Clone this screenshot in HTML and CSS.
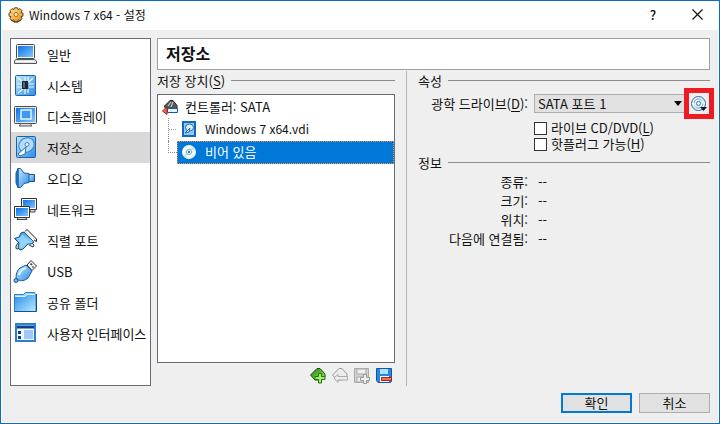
FILE: index.html
```html
<!DOCTYPE html>
<html lang="ko">
<head>
<meta charset="utf-8">
<title>Windows 7 x64 - 설정</title>
<link rel="stylesheet" href="styles.css">
</head>
<body>
<svg class="defs" aria-hidden="true">
  <defs>
    <linearGradient id="blue" x1="0" y1="0" x2="1" y2="1"><stop offset="0" stop-color="#0f6fe6"/><stop offset="1" stop-color="#7cc8ff"/></linearGradient>
    <linearGradient id="pale" x1="0" y1="0" x2="1" y2="1"><stop offset="0" stop-color="#c4e8ff"/><stop offset="1" stop-color="#2d8ce4"/></linearGradient>
    <linearGradient id="folder" x1="0" y1="0" x2="1" y2="1"><stop offset="0" stop-color="#2b8fe6"/><stop offset="1" stop-color="#b8ecff"/></linearGradient>
    <linearGradient id="gold" x1="0" y1="0" x2="1" y2="1"><stop offset="0" stop-color="#ffe79a"/><stop offset="1" stop-color="#e58a10"/></linearGradient>
    <linearGradient id="green" x1="0" y1="0" x2="1" y2="1"><stop offset="0" stop-color="#1c7a12"/><stop offset="1" stop-color="#a4f05c"/></linearGradient>
    <linearGradient id="disc" x1="0" y1="0" x2="1" y2="1"><stop offset="0" stop-color="#cfe6ff"/><stop offset=".3" stop-color="#ffffff"/><stop offset=".5" stop-color="#b8f0d8"/><stop offset=".7" stop-color="#ffffff"/><stop offset="1" stop-color="#b9c9fa"/></linearGradient>
  </defs>
</svg>
<div class="window">
  <header class="titlebar">
    <svg class="icon16" viewBox="0 0 16 16"><path d="M6.500.8h3l.5 1.800 2-1 2 2-1 1.900 2 .6v3l-2 .6 1 2-2 2-2-.9-.5 2h-3l-.5-2-2 .9-2-2 1-2-2-.6v-3l2-.6-1-1.900 2-2 2 1z" fill="url(#gold)" stroke="#6b431b"/><circle cx="8" cy="7.500" r="2" fill="#fff6d8" stroke="#b06a12"/><path d="M3 13l3 2h4l3-2" fill="none" stroke="#5b3410"/></svg>
    <h1 class="caption">Windows 7 x64 - 설정</h1>
    <button class="winbtn help" aria-label="도움말">?</button>
    <button class="winbtn" aria-label="닫기"><svg class="close" viewBox="0 0 11 11"><path d="M.5.5l10 10M10.500.5l-10 10" stroke="#111" stroke-width="1.200"/></svg></button>
  </header>
  <div class="content">
    <div class="panes">
      <nav class="nav">
        <a class="navitem" href="#general"><svg class="icon24" viewBox="0 0 24 24"><rect x="3.500" y="2.500" width="18" height="14" rx="1" fill="#f3f3f0" stroke="#45484d"/><rect x="5" y="4" width="15" height="11" fill="url(#blue)"/><path d="M2.500 17.500h19l2 1.500v2.500h-22V19z" fill="#e2e2df" stroke="#55585c"/><path d="M3 19.500h18" stroke="#fff"/></svg>일반</a>
        <a class="navitem" href="#system"><svg class="icon24" viewBox="0 0 24 24"><rect x="2.500" y="2.500" width="20" height="20" rx="1" fill="url(#pale)" stroke="#1a63ad"/><path d="M5 5l5 4M12 4v5M15 4v5M20 5l-4 4M4 11h5M4 14h5M16 11h5M16 14h5M5 20l5-4M12 16v5M15 16v4" stroke="#e9faff" stroke-width="1.200"/><rect x="9" y="8" width="6" height="8" fill="#202830"/><path d="M10 9h2v6h-2z" fill="#59636c"/></svg>시스템</a>
        <a class="navitem" href="#display"><svg class="icon24" viewBox="0 0 24 24"><rect x="1.500" y="2.500" width="22" height="17" rx="1" fill="#eceae3" stroke="#45484d"/><rect x="3" y="4" width="19" height="14" fill="url(#blue)"/><rect x="8" y="6" width="10" height="9" fill="#3f98f2" stroke="#e4f7ff" stroke-width="1.500"/><path d="M8 19.500h9l2 2.500H6z" fill="#ddd" stroke="#55585c"/></svg>디스플레이</a>
        <a class="navitem selected" href="#storage" aria-current="page"><svg class="icon24" viewBox="0 0 24 24"><rect x="3.500" y="1.500" width="19" height="21" rx="1" fill="url(#pale)" stroke="#1a63ad"/><ellipse cx="13.500" cy="10" rx="8" ry="7" transform="rotate(-35 13.500 10)" fill="#b5dcf8" stroke="#3684ca"/><circle cx="14" cy="9.500" r="2" fill="#edf8ff" stroke="#3684ca"/><path d="M13 12l-8 7 2 2 5-2z" fill="#fff" stroke="#2874bb"/></svg>저장소</a>
        <a class="navitem" href="#audio"><svg class="icon24" viewBox="0 0 24 24"><path d="M15 8.500h6.500v7H15z" fill="url(#pale)" stroke="#174d91"/><path d="M5 2.500h2.500L11 7l5 .5v9l-5 1-3.500 4H5z" fill="url(#pale)" stroke="#1d5faa"/><path d="M5 2.500L3 7v10l2 4.500z" fill="#2b7fd2" stroke="#1b599f"/></svg>오디오</a>
        <a class="navitem" href="#network"><svg class="icon24" viewBox="0 0 24 24"><path d="M8.500 1.500h15v11h-15z" fill="#fff" stroke="#333"/><path d="M10 3h12v8H10z" fill="url(#blue)"/><path d="M17 13v2h5v-2" fill="#ddd" stroke="#444"/><path d="M1.500 9.500h15v11h-15z" fill="#fff" stroke="#333"/><path d="M3 11h12v8H3z" fill="url(#blue)"/><path d="M5 21l-1 1.500h10L13 21" fill="#ddd" stroke="#444"/></svg>네트워크</a>
        <a class="navitem" href="#serial"><svg class="icon24" viewBox="0 0 24 24"><path d="M12 3.500l2-2L23.500 11v2.500L21 12" fill="#eee" stroke="#222"/><path d="M5 15l-2 3v2.500l2 .5 3-2M19 15l2 2-1 2-4-2" fill="#eee" stroke="#333"/><path d="M11 4L21 14l-3 2h-3l-5 5-3 1-2-3 1-4-4.500-4.500L6 9l2-4z" fill="url(#folder)" stroke="#174f91"/><path d="M9.500 6.500l8 8-5 1-5 5-.5-6-4-4 4-1z" fill="#a3dbff" fill-opacity=".7"/></svg>직렬 포트</a>
        <a class="navitem" href="#usb"><svg class="icon24" viewBox="0 0 24 24"><path d="M14 6l4-4.500L23.500 7 19 11.500z" fill="#f3f3f3" stroke="#333"/><path d="M17.500 4.500l1.500 1.500M19.500 7.500l1 1" stroke="#333" stroke-width="1.500"/><path d="M13 6l6 6-4 7c-3 3-7 3-10 2l-2-2c0-4 1-8 4-10z" fill="url(#pale)" stroke="#1b5fa8"/><path d="M6 16c1-4 3-6 7-7" stroke="#e3f6ff" stroke-width="2" fill="none"/><circle cx="3" cy="21.500" r="2" fill="#76b9ef" stroke="#164b8b"/></svg>USB</a>
        <a class="navitem" href="#shared"><svg class="icon24" viewBox="0 0 24 24"><path d="M1.500 4.500h9l2-2h9l1 2v17h-21z" fill="#9cd5fa" stroke="#2b7cc1"/><path d="M2 7h10l2-2h8.500v16.500H2z" fill="url(#folder)"/><path d="M1.500 21.500h22V4" fill="none" stroke="#154e99"/><path d="M2.500 6.500h9.500l2-2h8" fill="none" stroke="#d7f2ff"/></svg>공유 폴더</a>
        <a class="navitem" href="#ui"><svg class="icon24" viewBox="0 0 24 24"><rect x="3" y="3" width="19" height="17" fill="#f1f8ff" stroke="#2b7fd2" stroke-width="2"/><path d="M4 6h17" stroke="#0b408c" stroke-width="3"/><path d="M5 10h3v3H5zM5 15h3v3H5z" fill="#123f91"/><path d="M11 9h9v9h-9z" fill="#9fc8fc"/></svg>사용자 인터페이스</a>
      </nav>
      <main class="main">
        <h2 class="pagetitle">저장소</h2>
        <div class="columns">
          <section class="devices">
            <h3 class="group">저장 장치(<u>S</u>)</h3>
            <ul class="tree">
              <li class="node root"><svg class="icon16" viewBox="0 0 16 16"><path d="M2.500 7L8 1.500h3l4 5v5H4z" fill="#55585c" stroke="#252525"/><path d="M6 7l3-4M9 8l2-5" stroke="#ddd"/><path d="M5.500 9.500h10v4h-10z" fill="#e7f4ff" stroke="#1457a9"/><path d="M5 8l-4.500 4L5 15.500z" fill="#f06a45" stroke="#ad2410"/></svg>컨트롤러: SATA</li>
              <li class="node child"><span class="branch"></span><span class="cell file"><svg class="icon16" viewBox="0 0 16 16"><rect x="2" y="1" width="12" height="14" fill="#8accfa" stroke="#1668bf" stroke-width="2"/><ellipse cx="8.500" cy="6.500" rx="4" ry="3.500" fill="#d9f0ff" stroke="#286faf"/><path d="M9 7l-5 5 4-1z" fill="#fff" stroke="#286faf"/></svg>Windows 7 x64.vdi</span></li>
              <li class="node child"><span class="branch last"></span><span class="cell current"><svg class="icon16" viewBox="0 0 16 16"><circle cx="8" cy="8" r="7" fill="url(#disc)"/><circle cx="8" cy="8" r="2.500" fill="#fff" stroke="#70a6d8"/><circle cx="8" cy="8" r="1" fill="#123d70"/></svg>비어 있음</span></li>
            </ul>
            <div class="toolbar">
              <button class="tool" aria-label="컨트롤러 추가"><svg class="icon16" viewBox="0 0 16 16"><path d="M.5 7L7 .5h3L15 6v3l-5 3H5z" fill="url(#green)" stroke="#174f12"/><path d="M8.500 5.500h3v3h3.500v3h-3.500v3.500h-3v-3.500H5v-3h3.500z" fill="#a8ed69" stroke="#207114"/></svg></button>
              <button class="tool" aria-label="컨트롤러 제거" disabled><svg class="icon16" viewBox="0 0 16 16"><path d="M.5 7L7 .5h3L15 6v3l-5 3H5z" fill="#ececec" stroke="#999"/><path d="M6 8.500h9.500v3.500H6v2.500L2 10l4-3.500z" fill="#eee" stroke="#aaa"/></svg></button>
              <button class="tool" aria-label="연결 추가" disabled><svg class="icon16" viewBox="0 0 16 16"><path d="M.5.5h14v14H.5z" fill="#d0d0d0" stroke="#aaa"/><path d="M3 1h9v5H3zM3 9h8v5H3z" fill="#eee" stroke="#aaa"/><path d="M9.500 6.500h3v3h3v3h-3v3h-3v-3h-3v-3h3z" fill="#eee" stroke="#999"/></svg></button>
              <button class="tool" aria-label="연결 제거"><svg class="icon16" viewBox="0 0 16 16"><path d="M.5.5h15v13l-1 1H2l-1.500-2z" fill="#2687df" stroke="#14569f"/><path d="M4 1h8v5H4z" fill="#a8e2ff"/><path d="M4 8h9v6H4z" fill="#e8f6ff"/><path d="M5.500 9.500h10v3h-10z" fill="#ee7050" stroke="#b8210d"/></svg></button>
            </div>
          </section>
          <section class="details">
            <h3 class="group">속성</h3>
            <div class="drive">
              <label class="key" for="drive">광학 드라이브(<u>D</u>):</label>
              <div class="combo"><select class="select" id="drive"><option>SATA 포트 1</option></select><svg class="arrow" viewBox="0 0 8 5"><path d="M0 0h8L4 5z"/></svg></div>
              <button class="tool choose" aria-label="디스크 선택"><svg class="icon16" viewBox="0 0 16 16"><circle cx="7.500" cy="7.500" r="7" fill="url(#disc)" stroke="#3464a8"/><circle cx="7.500" cy="7.500" r="4.500" fill="none" stroke="#5d9fe6" stroke-dasharray="9 5"/><circle cx="7.500" cy="7.500" r="2" fill="#fff" stroke="#2f74c4"/><path d="M9 11h7l-3.500 4z" fill="#101820"/></svg></button>
            </div>
            <div class="checks">
              <label class="check"><input class="box" type="checkbox"><span>라이브 CD/DVD(<u>L</u>)</span></label>
              <label class="check"><input class="box" type="checkbox"><span>핫플러그 가능(<u>H</u>)</span></label>
            </div>
            <h3 class="group">정보</h3>
            <dl class="facts">
              <dt>종류:</dt><dd>--</dd>
              <dt>크기:</dt><dd>--</dd>
              <dt>위치:</dt><dd>--</dd>
              <dt>다음에 연결됨:</dt><dd>--</dd>
            </dl>
          </section>
        </div>
      </main>
    </div>
    <footer class="actions">
      <button class="button primary">확인</button>
      <button class="button">취소</button>
    </footer>
  </div>
</div>
</body>
</html>
```
FILE: styles.css
```css
* { box-sizing: border-box; }
body {
  margin: 0;
  font: 13px/19px "Noto Sans CJK KR", sans-serif;
  color: #111;
}
h1, h2, h3, ul, dl, dd { margin: 0; padding: 0; font: inherit; }
button, select { font: inherit; color: inherit; }
u { text-underline-offset: 2px; }
.defs { position: absolute; width: 0; height: 0; }
.icon16 { width: 16px; height: 16px; flex: none; display: block; }
.icon24 { width: 24px; height: 24px; flex: none; }

.window {
  min-height: 100vh;
  display: flex;
  flex-direction: column;
  border: 1px solid #0a6fc2;
  background: #fff;
}
.titlebar {
  display: flex;
  align-items: center;
  height: 29px;
  padding: 0 0 2px 7px;
}
.caption { flex: 1; margin-left: 5px; font-size: 12px; }
.winbtn {
  display: grid;
  place-items: center;
  width: 44px;
  height: 27px;
  padding: 0;
  border: 0;
  background: none;
}
.help { font-weight: 500; }
.close { width: 11px; height: 11px; }

.content {
  flex: 1;
  display: flex;
  flex-direction: column;
  margin: 0 1px 1px;
  padding: 8px 8px 9px;
  background: #efefef;
}
.panes { flex: 1; display: flex; gap: 6px; }
.nav {
  width: 141px;
  border: 1px solid #696c75;
  background: #fff;
}
.navitem {
  display: flex;
  align-items: center;
  gap: 10px;
  height: 31px;
  padding: 0 0 1px 2px;
  color: inherit;
  text-decoration: none;
  white-space: nowrap;
}
.selected { background: #d9d9d9; }

.main { flex: 1; display: flex; flex-direction: column; }
.pagetitle {
  height: 32px;
  padding-left: 8px;
  border: 1px solid #a0a0a0;
  background: #fff;
  font-size: 16px;
  font-weight: 700;
  line-height: 29px;
}
.columns {
  flex: 1;
  display: grid;
  grid-template-columns: 238px 1fr;
  gap: 11px;
  padding-top: 1px;
}
.group {
  display: flex;
  align-items: center;
  white-space: nowrap;
}
.group::after {
  content: "";
  flex: 1;
  height: 1px;
  margin-left: 6px;
  background: #8c8c8c;
}
.devices { display: flex; flex-direction: column; }
.tree {
  flex: 1;
  margin-top: 4px;
  border: 1px solid #696c75;
  background: #fff;
  list-style: none;
}
.node { display: flex; align-items: center; height: 23px; }
.root { gap: 7px; padding-left: 4px; }
.child { padding-left: 10px; align-items: stretch; }
.branch {
  width: 9px;
  border-left: 1px dotted #8c8c8c;
  background: linear-gradient(90deg, #999 50%, transparent 50%) 0 50% / 2px 1px repeat-x;
}
.last {
  height: 12px;
  border-bottom: 1px dotted #8c8c8c;
  background: none;
}
.cell { flex: 1; display: flex; align-items: center; gap: 8px; padding: 0 0 2px 3px; border: 1px solid transparent; }
.file { font-size: 12px; }
.current { border: 1px dotted #f0904a; background: #0078d7; color: #fff; }
.toolbar {
  display: flex;
  justify-content: flex-end;
  gap: 6px;
  padding: 5px 3px 2px;
}
.tool { padding: 0; border: 0; background: none; }

.details {
  padding-left: 11px;
  border-left: 1px solid #b4b4b4;
}
.drive { position: relative; display: grid; grid-template-columns: 110px 1fr; align-items: center; margin-top: 4px; }
.key { white-space: nowrap; text-align: right; }
.combo { position: relative; margin: 0 25px 0 6px; }
.select {
  display: block;
  width: 100%;
  height: 19px;
  padding: 0 3px;
  border: 1px solid #adadad;
  border-radius: 0;
  background: #e1e1e1;
  appearance: none;
  line-height: 17px;
}
.arrow { position: absolute; right: 3px; top: 7px; width: 8px; height: 5px; pointer-events: none; }
.choose {
  position: absolute;
  right: -4px;
  top: -6px;
  display: grid;
  place-items: center;
  width: 30px;
  height: 31px;
  border: 5px solid #ed1c24;
  background: #efefef;
}
.checks { padding: 7px 0 1px 116px; }
.check { display: flex; align-items: center; gap: 4px; height: 16px; line-height: 16px; white-space: nowrap; }
.box {
  width: 13px;
  height: 13px;
  margin: 0;
  border: 1px solid #333;
  background: #fff;
  appearance: none;
}
.facts {
  display: grid;
  grid-template-columns: 110px 1fr;
  column-gap: 10px;
}
.facts dt { text-align: right; white-space: nowrap; }

.actions { display: flex; justify-content: flex-end; gap: 7px; padding-top: 7px; }
.button {
  width: 71px;
  height: 20px;
  padding: 0;
  border: 1px solid #adadad;
  background: #e1e1e1;
  line-height: 16px;
}
.primary { border: 2px solid #0078d7; }
```
